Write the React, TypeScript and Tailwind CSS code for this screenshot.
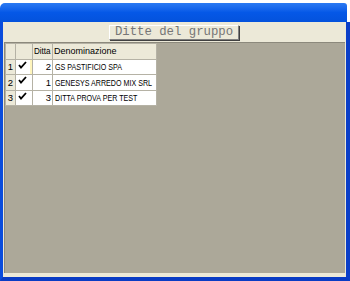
import React from "react";

const rows = [
    { n: 1, ditta: 2, nome: "GS PASTIFICIO SPA" },
    { n: 2, ditta: 1, nome: "GENESYS ARREDO MIX SRL" },
    { n: 3, ditta: 3, nome: "DITTA PROVA PER TEST" },
];

function Check() {
    return (
        <svg width="9" height="8" viewBox="0 0 9 8" className="block">
            <path d="M1 4 L3 6.5 L8 1" fill="none" stroke="#000" strokeWidth="1.8" />
        </svg>
    );
}

const cell = "border-r border-b border-[#b5b2a5] flex items-center overflow-hidden whitespace-nowrap";

export default function App() {
    return (
        <div className="w-[350px] h-[281px] bg-white flex flex-col overflow-hidden" style={{ fontFamily: "'Liberation Sans', Arial, sans-serif" }}>
            <div className="h-[3px] bg-white" />
            {/* title bar */}
            <div className="h-[19px] mr-[3px] rounded-tl-[5px] rounded-tr-[3px] bg-gradient-to-b from-[#2b7af2] via-[#0558e7] to-[#0452dc]" />
            <div className="flex-1 flex flex-col border-l-[3px] border-r-[4px] border-b-[4px] border-l-[#0a4cdc] border-r-[#0b3fc8] border-b-[#0a3cc4] bg-[#ece9d8]">
                {/* toolbar */}
                <div className="h-[20px] flex items-center pl-[106px]">
                    <div className="w-[130px] h-[15px] flex items-center justify-center bg-[#ece9d8] border border-t-white border-l-white border-b-[#808080] border-r-[#808080] shadow-[1px_1px_0_#404040]">
                        <span className="text-[12.3px] leading-none text-[#767676]" style={{ fontFamily: "'Liberation Mono', 'Courier New', monospace" }}>
                            Ditte del gruppo
                        </span>
                    </div>
                </div>
                {/* grid area */}
                <div className="flex-1 ml-[1px] mr-[1px] mb-[4px] bg-[#aca899] border-t border-l border-[#8c897c]">
                    <div className="grid grid-cols-[10px_17px_20px_104px] auto-rows-[15.5px] w-fit border-l border-t border-[#b5b2a5] text-[9px] leading-none text-black">
                        <div className={`${cell} bg-[#ece9d8] h-[16px]`} />
                        <div className={`${cell} bg-[#ece9d8] h-[16px]`} />
                        <div className={`${cell} bg-[#ece9d8] h-[16px] justify-center`}>
                            <span className="inline-block scale-x-[0.9]">Ditta</span>
                        </div>
                        <div className={`${cell} bg-[#ece9d8] h-[16px] px-[1px]`}>Denominazione</div>
                        {rows.map((r, i) => (
                            <React.Fragment key={r.n}>
                                <div className={`${cell} bg-[#ece9d8] justify-center text-[9.5px]`}>{r.n}</div>
                                <div className={`${cell} bg-white items-start pl-[2px] pt-[1px] ${i === 0 ? "shadow-[inset_-2px_0_0_#fff5bd]" : ""}`}>
                                    <Check />
                                </div>
                                <div className={`${cell} bg-white justify-end pr-[1px] text-[9.5px]`}>{r.ditta}</div>
                                <div className={`${cell} bg-white pl-[2px] text-[9.5px]`}>
                                    <span className="inline-block scale-x-[0.75] origin-left">{r.nome}</span>
                                </div>
                            </React.Fragment>
                        ))}
                    </div>
                </div>
            </div>
        </div>
    );
}
